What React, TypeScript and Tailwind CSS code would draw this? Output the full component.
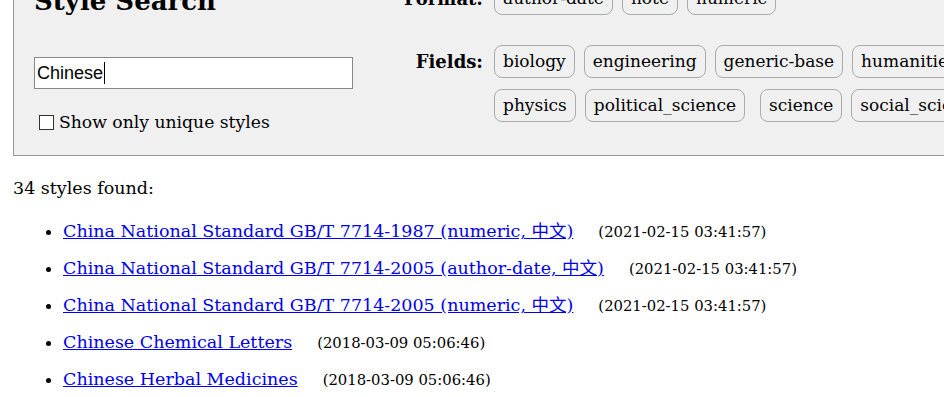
import React from 'react';

const formats = ['author-date', 'note', 'numeric'];
const fieldsRow1 = ['biology', 'engineering', 'generic-base', 'humanities', 'linguistics'];
const fieldsRow2 = ['physics', 'political_science', 'science', 'social_science', 'theology'];

const results = [
  { title: 'China National Standard GB/T 7714-1987 (numeric, 中文)', date: '(2021-02-15 03:41:57)' },
  { title: 'China National Standard GB/T 7714-2005 (author-date, 中文)', date: '(2021-02-15 03:41:57)' },
  { title: 'China National Standard GB/T 7714-2005 (numeric, 中文)', date: '(2021-02-15 03:41:57)' },
  { title: 'Chinese Chemical Letters', date: '(2018-03-09 05:06:46)' },
  { title: 'Chinese Herbal Medicines', date: '(2018-03-09 05:06:46)' },
];

const Tag: React.FC<{ label: string; className?: string }> = ({ label, className = '' }) => (
  <button className={`h-[33px] px-[8px] rounded-[8px] border border-[#aaa] bg-[#f0f0f0] text-[17px] text-black leading-none whitespace-nowrap ${className}`}>
    {label}
  </button>
);

const App: React.FC = () => {
  return (
    <div className="w-[944px] h-[397px] overflow-hidden bg-white font-['DejaVu_Serif','Noto_Sans_CJK_SC',serif] text-black">
      <div className="mt-[-40px]">
        {/* Search panel */}
        <div className="ml-[13px] w-[1100px] border border-[#999] bg-[#f0f0f0] flex items-start">
          <div className="pl-[20px] w-[380px] shrink-0 pt-[24px]">
            <h2 className="text-[26px] font-bold leading-[32px]">Style Search</h2>
            <div className="mt-[40px] w-[319px] h-[32px] border border-[#888] bg-white px-[2px] flex items-center text-[18px] font-['Liberation_Sans',sans-serif]">
              Chinese<span className="ml-[1px] w-[1px] h-[22px] bg-black"></span>
            </div>
            <label className="mt-[21px] flex items-center text-[17.2px]">
              <span className="ml-[5px] w-[15px] h-[15px] border border-[#333] bg-white mr-[5px]"></span>
              Show only unique styles
            </label>
          </div>
          <div className="pt-[21px] pb-[33px] grid grid-cols-[89px_auto] gap-x-[11px] content-start">
            <div className="text-right font-bold text-[18px] h-[33px] flex items-center justify-end">Format:</div>
            <div className="flex gap-[9px]">
              {formats.map(f => <Tag key={f} label={f} />)}
            </div>
            <div className="mt-[30px] text-right font-bold text-[18px] h-[33px] flex items-center justify-end">Fields:</div>
            <div className="mt-[30px] flex flex-col gap-[11px]">
              <div className="flex gap-[9px]">
                {fieldsRow1.map(f => <Tag key={f} label={f} />)}
              </div>
              <div className="flex gap-[9px]">
                {fieldsRow2.map(f => <Tag key={f} label={f} className={f === 'science' ? 'ml-[6px]' : ''} />)}
              </div>
            </div>
          </div>
        </div>

        {/* Results */}
        <p className="ml-[13px] mt-[19px] text-[17.5px]">34 styles found:</p>
        <ul className="list-disc pl-[63px] mt-[12px] text-[17.5px]">
          {results.map(r => (
            <li key={r.title} className="h-[37px] leading-[37px]">
              <a href="#" className="text-[#0000ee] underline">{r.title}</a>
              <span className="ml-[25px] text-[14.8px]">{r.date}</span>
            </li>
          ))}
        </ul>
      </div>
    </div>
  );
};

export default App;
